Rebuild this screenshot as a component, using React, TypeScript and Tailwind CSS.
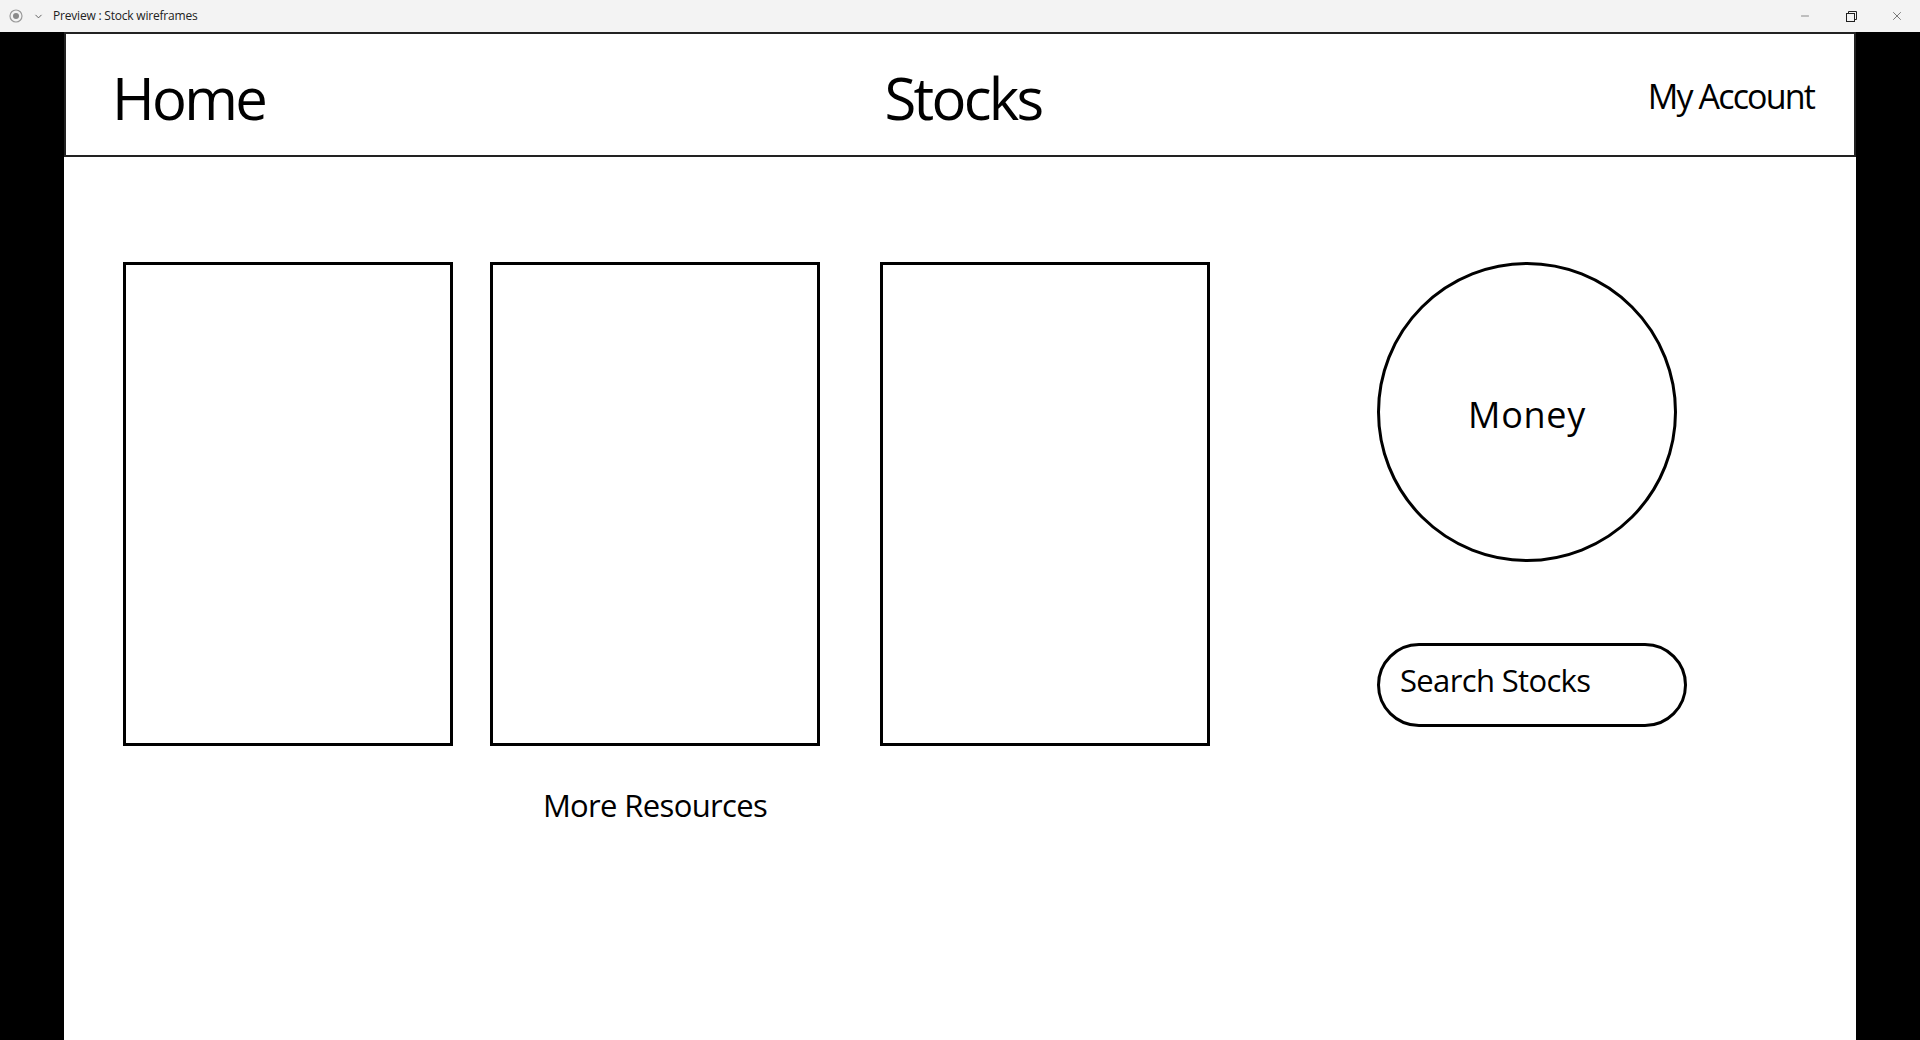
import { ChevronDown, Minus, X } from "lucide-react";

function TitleBar() {
  return (
    <div className="h-8 bg-[#f3f3f3] flex items-center justify-between text-[#1f1f1f]">
      <div className="flex items-center">
        <svg width="14" height="14" viewBox="0 0 14 14" className="ml-[9px]">
          <circle cx="7" cy="7" r="6" fill="none" stroke="#9a9a9a" strokeWidth="1.2" />
          <circle cx="7" cy="7" r="3" fill="#8a8a8a" />
        </svg>
        <ChevronDown size={11} strokeWidth={2} className="ml-[10px] text-[#555]" />
        <span className="ml-[9px] text-[12px] font-['Open_Sans',sans-serif] text-[#222] tracking-[-0.2px]">
          Preview : Stock wireframes
        </span>
      </div>
      <div className="flex items-center h-full">
        <div className="w-[46px] h-full flex items-center justify-center">
          <Minus size={12} strokeWidth={1} />
        </div>
        <div className="w-[46px] h-full flex items-center justify-center">
          <svg width="11" height="11" viewBox="0 0 11 11" fill="none" stroke="#1f1f1f" strokeWidth="1">
            <rect x="0.5" y="2.5" width="8" height="8" />
            <path d="M2.5 2.5V0.5H10.5V8.5H8.5" />
          </svg>
        </div>
        <div className="w-[46px] h-full flex items-center justify-center">
          <X size={14} strokeWidth={1} />
        </div>
      </div>
    </div>
  );
}

function Card() {
  return <div className="w-[330px] h-[484px] border-[3px] border-black bg-white" />;
}

export default function App() {
  return (
    <div className="h-screen w-full bg-black flex flex-col overflow-hidden font-['Open_Sans',sans-serif] text-black">
      <TitleBar />
      <div className="flex-1 mx-[64px] bg-white flex flex-col">
        <header className="h-[125px] border-2 border-[#222] grid grid-cols-[1fr_auto_1fr] items-center pl-[46px] pr-[40px]">
          <div className="text-[58px] leading-none pt-[6px] tracking-[-2.7px]">Home</div>
          <div className="text-[58px] leading-none pt-[6px] tracking-[-2.7px]">Stocks</div>
          <div className="text-[34px] leading-none pt-[2px] justify-self-end tracking-[-1.85px]">My Account</div>
        </header>

        <div className="flex pt-[105px] pl-[59px]">
          <div className="flex items-start">
            <Card />
            <div className="ml-[37px] flex flex-col items-center">
              <Card />
              <div className="mt-[44px] text-[31px] leading-none tracking-[-0.65px]">More Resources</div>
            </div>
            <div className="ml-[60px]">
              <Card />
            </div>
          </div>

          <div className="ml-[167px] flex flex-col">
            <div className="w-[300px] h-[300px] rounded-full border-[3px] border-black flex items-center justify-center pt-[5px]">
              <span className="text-[36px] leading-none tracking-[0.7px]">Money</span>
            </div>
            <div className="mt-[81px] w-[310px] h-[84px] rounded-full border-[3px] border-black flex items-center pl-[20px] pb-[10px]">
              <span className="text-[31px] leading-none tracking-[-0.65px]">Search Stocks</span>
            </div>
          </div>
        </div>
      </div>
    </div>
  );
}
